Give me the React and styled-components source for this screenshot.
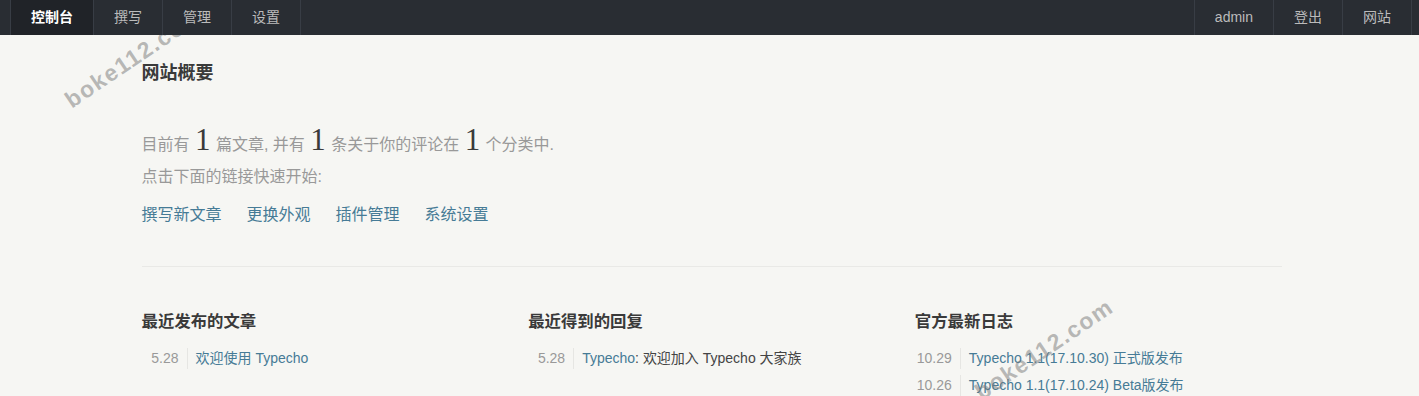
import React from 'react'
import styled, { createGlobalStyle } from 'styled-components'

const GlobalStyle = createGlobalStyle`
  html, body {
    margin: 0;
    padding: 0;
    background: #F6F6F3;
  }
  body {
    font-family: "Liberation Sans", "Noto Sans CJK SC", sans-serif;
    font-size: 14px;
    color: #444;
  }
  a {
    color: #467B96;
    text-decoration: none;
  }
`

const Page = styled.div`
  position: relative;
  min-height: 396px;
  overflow: hidden;
`

const NavBar = styled.div`
  position: relative;
  z-index: 2;
  display: flex;
  justify-content: space-between;
  height: 35px;
  padding: 0 7px 0 10px;
  background: #292D33;
`

const Menu = styled.ul`
  display: flex;
  margin: 0;
  padding: 0;
  list-style: none;
  border-left: 1px solid #383D45;
`

const NavLink = styled.a`
  display: block;
  padding: 0 20px;
  line-height: 35px;
  border-right: 1px solid #383D45;
  color: ${(props) => (props.$active ? '#FFF' : '#BBB')};
  background: ${(props) => (props.$active ? '#202328' : 'transparent')};
  font-weight: ${(props) => (props.$active ? 'bold' : 'normal')};
`

const Container = styled.div`
  max-width: 1140px;
  margin: 0 auto;
  padding: 26px 8px 0 12px;
`

const Title = styled.h2`
  margin: 0;
  font-size: 18px;
  line-height: 24px;
  font-weight: bold;
  color: #3a3a3a;
`

const Welcome = styled.p`
  margin: 39px 0 0;
  font-size: 16px;
  line-height: 32px;
  color: #999;
`

const Count = styled.em`
  font-family: "Liberation Serif", serif;
  font-style: normal;
  font-size: 31px;
  line-height: 1;
  color: #3a3a3a;
  padding: 0 1px;
`

const QuickLinks = styled.div`
  display: flex;
  gap: 25px;
  margin-top: 10px;
  font-size: 16px;
  line-height: 24px;
`

const Rule = styled.hr`
  margin: 39px 0 0;
  border: 0;
  border-top: 1px solid #E9E9E6;
`

const Columns = styled.div`
  display: grid;
  grid-template-columns: repeat(3, 1fr);
  margin: 0 -10px;
  padding-top: 42px;
`

const Column = styled.section`
  padding: 0 10px;
`

const ColumnTitle = styled.h3`
  margin: 0 0 12px;
  font-size: 16.4px;
  line-height: 24px;
  font-weight: bold;
  color: #3a3a3a;
`

const List = styled.ul`
  margin: 0;
  padding: 0;
  list-style: none;
`

const Item = styled.li`
  display: flex;
  align-items: center;
  padding: 3px 0;
  line-height: 21px;
  color: #444;
`

const Date = styled.span`
  width: 37px;
  margin-right: 8px;
  padding-right: 8px;
  border-right: 1px solid #E6E6E3;
  text-align: right;
  color: #999;
`

// watermark: $x/$y is the bottom-left corner of the text before rotation
const Watermark = styled.div`
  position: absolute;
  z-index: 1;
  left: ${(props) => props.$x}px;
  top: ${(props) => props.$y - 23}px;
  transform-origin: 0 100%;
  transform: rotate(-34deg);
  font-family: "Liberation Sans", sans-serif;
  font-size: 23px;
  line-height: 23px;
  font-weight: bold;
  letter-spacing: 1.5px;
  color: rgba(120, 120, 120, 0.5);
  white-space: nowrap;
  pointer-events: none;
`

const recentPosts = [{ date: '5.28', title: '欢迎使用 Typecho' }]
const recentComments = [{ date: '5.28', author: 'Typecho', text: '欢迎加入 Typecho 大家族' }]
const news = [
  { date: '10.29', title: 'Typecho 1.1(17.10.30) 正式版发布' },
  { date: '10.26', title: 'Typecho 1.1(17.10.24) Beta版发布' },
]

export default function App() {
  return (
    <Page>
      <GlobalStyle />
      <NavBar>
        <Menu>
          <li><NavLink $active>控制台</NavLink></li>
          <li><NavLink>撰写</NavLink></li>
          <li><NavLink>管理</NavLink></li>
          <li><NavLink>设置</NavLink></li>
        </Menu>
        <Menu>
          <li><NavLink>admin</NavLink></li>
          <li><NavLink>登出</NavLink></li>
          <li><NavLink>网站</NavLink></li>
        </Menu>
      </NavBar>

      <Container>
        <Title>网站概要</Title>
        <Welcome>
          目前有 <Count>1</Count> 篇文章, 并有 <Count>1</Count> 条关于你的评论在 <Count>1</Count> 个分类中.
          <br />
          点击下面的链接快速开始:
        </Welcome>
        <QuickLinks>
          <a>撰写新文章</a>
          <a>更换外观</a>
          <a>插件管理</a>
          <a>系统设置</a>
        </QuickLinks>
        <Rule />

        <Columns>
          <Column>
            <ColumnTitle>最近发布的文章</ColumnTitle>
            <List>
              {recentPosts.map((p) => (
                <Item key={p.title}>
                  <Date>{p.date}</Date>
                  <a>{p.title}</a>
                </Item>
              ))}
            </List>
          </Column>
          <Column>
            <ColumnTitle>最近得到的回复</ColumnTitle>
            <List>
              {recentComments.map((c) => (
                <Item key={c.text}>
                  <Date>{c.date}</Date>
                  <span><a>{c.author}</a>: {c.text}</span>
                </Item>
              ))}
            </List>
          </Column>
          <Column>
            <ColumnTitle>官方最新日志</ColumnTitle>
            <List>
              {news.map((n) => (
                <Item key={n.title}>
                  <Date>{n.date}</Date>
                  <a>{n.title}</a>
                </Item>
              ))}
            </List>
          </Column>
        </Columns>
      </Container>

      <Watermark $x={74} $y={112}>boke112.com</Watermark>
      <Watermark $x={984} $y={404}>boke112.com</Watermark>
    </Page>
  )
}
